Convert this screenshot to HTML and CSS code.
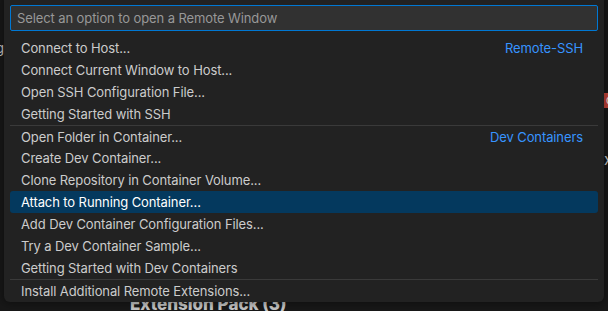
FILE: index.html
```html
<!DOCTYPE html>
<html lang="en">
<head>
    <meta charset="UTF-8">
    <meta name="viewport" content="width=device-width, initial-scale=1.0">
    <title>Remote Window</title>
    <link rel="stylesheet" href="styles.css">
</head>
<body>
    <!-- editor behind the picker -->
    <div class="editor">
        <span class="bg-frag">g.</span>
        <span class="bg-badge">d</span>
        <span class="bg-close">x</span>
        <h2 class="bg-title">Extension Pack (3)</h2>
    </div>

    <!-- Quick pick -->
    <div class="quick-input">
        <div class="input-box">Select an option to open a Remote Window</div>
        <div class="list">
            <div class="row">
                <span class="label">Connect to Host...</span>
                <span class="desc">Remote-SSH</span>
            </div>
            <div class="row"><span class="label">Connect Current Window to Host...</span></div>
            <div class="row"><span class="label">Open SSH Configuration File...</span></div>
            <div class="row"><span class="label">Getting Started with SSH</span></div>

            <div class="row sep">
                <span class="label">Open Folder in Container...</span>
                <span class="desc">Dev Containers</span>
            </div>
            <div class="row"><span class="label">Create Dev Container...</span></div>
            <div class="row"><span class="label">Clone Repository in Container Volume...</span></div>
            <div class="row active"><span class="label">Attach to Running Container...</span></div>
            <div class="row"><span class="label">Add Dev Container Configuration Files...</span></div>
            <div class="row"><span class="label">Try a Dev Container Sample...</span></div>
            <div class="row"><span class="label">Getting Started with Dev Containers</span></div>

            <div class="row sep"><span class="label">Install Additional Remote Extensions...</span></div>
        </div>
    </div>
</body>
</html>
```

FILE: styles.css
```css
body {
    margin: 0;
    width: 608px;
    height: 311px;
    overflow: hidden;
    background-color: #181818;
    color: #cccccc;
    font-family: Inter, "Noto Sans", sans-serif;
    font-size: 13px;
    letter-spacing: -0.1px;
}
.editor {
    position: relative;
    width: 608px;
    height: 311px;
}
.bg-frag {
    position: absolute;
    left: -4px;
    top: 40px;
}
.bg-badge {
    position: absolute;
    left: 604px;
    top: 93px;
    width: 16px;
    height: 15px;
    background: #c4453a;
    color: #eee;
    font-size: 11px;
    line-height: 15px;
    padding-left: 2px;
}
.bg-close {
    position: absolute;
    left: 604px;
    top: 150px;
    font-size: 15px;
}
.bg-title {
    position: absolute;
    left: 130px;
    top: 294px;
    margin: 0;
    font-size: 17px;
    font-weight: 800;
    color: #c8c8c8;
    letter-spacing: 0;
}
.quick-input {
    position: absolute;
    left: 4px;
    top: -6px;
    width: 600px;
    height: 308px;
    box-sizing: border-box;
    padding: 11px 6px 0;
    background: #222222;
    border-radius: 6px;
    box-shadow: 0 0 8px 2px rgba(0, 0, 0, 0.36);
}
.input-box {
    height: 26px;
    box-sizing: border-box;
    border: 1px solid #0078d4;
    border-radius: 2px;
    background: #313131;
    color: #989898;
    padding: 0 6px;
    line-height: 24px;
}
.list {
    margin-top: 6px;
}
.row {
    display: flex;
    justify-content: space-between;
    align-items: center;
    height: 22px;
    padding: 0 15px 0 11px;
    border-radius: 3px;
}
.row.sep {
    border-top: 1px solid #3a3a3a;
    border-radius: 0;
    height: 21px;
}
.row.active {
    background: #04395e;
    color: #ffffff;
}
.desc {
    color: #3794ff;
}
```
